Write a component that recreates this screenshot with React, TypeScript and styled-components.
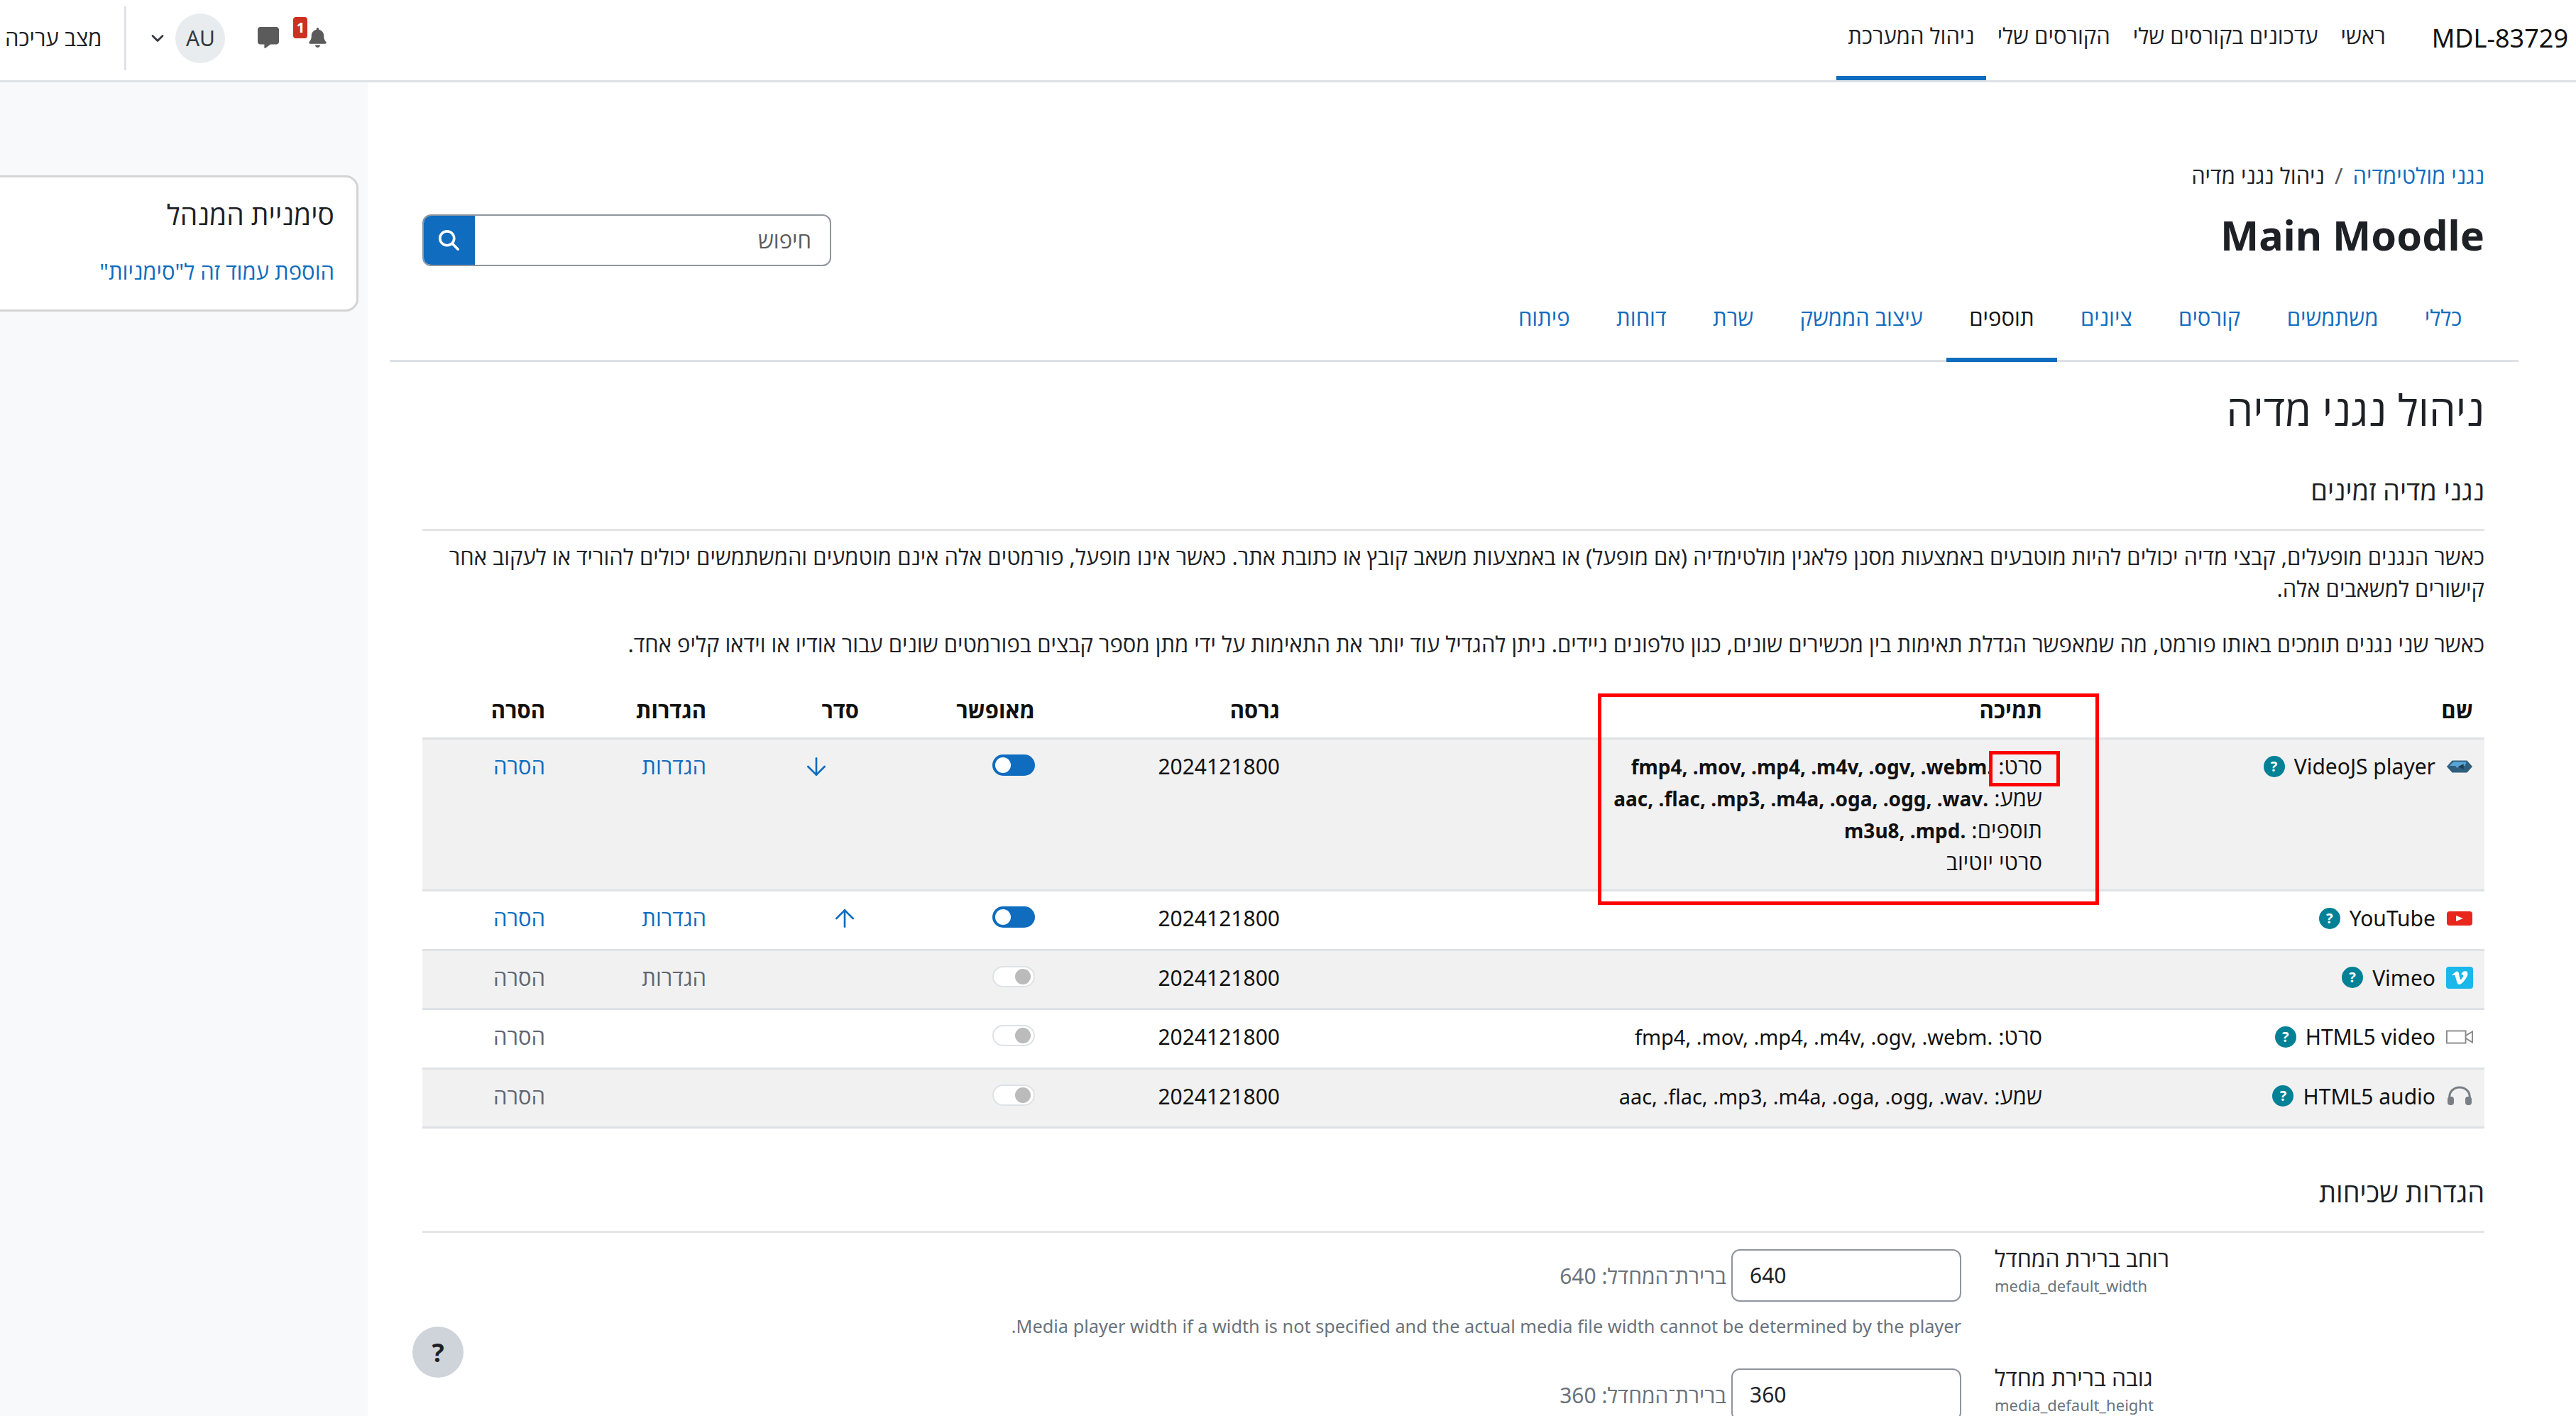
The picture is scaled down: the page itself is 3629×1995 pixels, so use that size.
import React from 'react';
import styled, { createGlobalStyle } from 'styled-components';
import { FaBell, FaMessage, FaMagnifyingGlass, FaVimeoV } from 'react-icons/fa6';
import { ArrowDown, ArrowUp, ChevronDown } from 'lucide-react';

const FONT = `"Noto Sans", "Open Sans", "Liberation Sans", sans-serif`;
const BLUE = '#0f6cbf';
const INK = '#1d2125';
const MUTED = '#6a737b';

const Global = createGlobalStyle`
  html, body { margin: 0; padding: 0; background: #fff; }
  body { font-family: ${FONT}; font-size: 31px; line-height: 45px; color: ${INK}; overflow: hidden; }
  * { box-sizing: border-box; }
`;

const Page = styled.div`
  width: 3629px;
  height: 1995px;
  overflow: hidden;
  display: flex;
  flex-direction: column;
`;

const Header = styled.header`
  flex: 0 0 116px;
  height: 116px;
  border-bottom: 3px solid #dee2e6;
  display: flex;
  align-items: stretch;
  padding: 0 11px 0 7px;
`;

const Brand = styled.div`
  align-self: center;
  font-size: 36px;
  color: #111;
  margin-left: 49px;
  margin-bottom: 6px;
`;

const TopNav = styled.nav`
  display: flex;
`;

const TopLink = styled.a<{ $active?: boolean }>`
  display: flex;
  align-items: center;
  padding: 0 16px 6px;
  color: ${INK};
  border-bottom: 6px solid ${p => (p.$active ? BLUE : 'transparent')};
`;

const UserArea = styled.div`
  margin-right: auto;
  display: flex;
  align-items: center;
  padding-bottom: 6px;
`;

const Bell = styled.div`
  position: relative;
  width: 27px;
  height: 30px;
  margin-left: 41px;
  color: #5b5b5b;
  display: flex;
`;

const Badge = styled.span`
  position: absolute;
  top: -15px;
  right: 28px;
  width: 20px;
  height: 30px;
  border-radius: 4px;
  background: #ca3120;
  color: #fff;
  font-size: 20px;
  line-height: 30px;
  font-weight: 700;
  text-align: center;
`;

const MessageIcon = styled.div`
  width: 30px;
  height: 31px;
  margin-left: 46px;
  color: #5b5b5b;
  display: flex;
`;

const Avatar = styled.div`
  width: 70px;
  height: 70px;
  border-radius: 50%;
  background: #e9ecef;
  color: #343a40;
  font-size: 30px;
  display: flex;
  align-items: center;
  justify-content: center;
  margin-left: 10px;
`;

const Chevron = styled.div`
  width: 30px;
  display: flex;
  justify-content: center;
  color: #343a40;
  margin-left: 29px;
`;

const Divider = styled.div`
  width: 3px;
  height: 90px;
  background: #dee2e6;
  margin-left: 32px;
`;

const EditMode = styled.span`
  color: ${INK};
`;

const Body = styled.div`
  flex: 1;
  min-height: 0;
  display: flex;
`;

const Main = styled.main`
  flex: 1;
  min-width: 0;
  padding: 109px 129px 0 77px;
`;

const Drawer = styled.aside`
  flex: 0 0 518px;
  background: #f8f9fa;
  padding: 131px 13px 0 0;
`;

const BlockCard = styled.section`
  margin-left: -40px;
  height: 192px;
  background: #fff;
  border: 3px solid #d4d4d4;
  border-radius: 18px;
  padding: 28px 31px 0 0;
`;

const BlockTitle = styled.h5`
  margin: 0 0 34px;
  font-size: 39px;
  line-height: 48px;
  font-weight: 400;
  color: ${INK};
`;

const TextLink = styled.a`
  color: ${BLUE};
`;

const Breadcrumb = styled.div`
  display: flex;
  height: 45px;
`;

const Sep = styled.span`
  color: #5b5b5b;
  margin: 0 14px;
`;

const HeadRow = styled.div`
  margin-top: 26px;
  height: 89px;
  display: flex;
  justify-content: space-between;
  align-items: flex-start;
`;

const SiteTitle = styled.h1`
  margin: 0;
  font-size: 57.5px;
  line-height: 70px;
  font-weight: 700;
  color: ${INK};
`;

const SearchBox = styled.div`
  margin-top: 6px;
  width: 576px;
  height: 73px;
  display: flex;
  border: 2px solid #8f959e;
  border-radius: 12px;
  overflow: hidden;
`;

const SearchLabel = styled.span`
  flex: 1;
  padding: 0 26px;
  color: #5b5b5b;
  line-height: 68px;
`;

const SearchButton = styled.div`
  width: 74px;
  margin: -2px 0 -2px -2px;
  background: ${BLUE};
  color: #fff;
  display: flex;
  align-items: center;
  justify-content: center;
`;

const Tabs = styled.nav`
  margin: 0 -48px 0 -46px;
  border-bottom: 3px solid #dee2e6;
  display: flex;
  padding-right: 47px;
`;

const Tab = styled.a<{ $active?: boolean }>`
  padding: 40px 32.7px 34px;
  color: ${p => (p.$active ? '#111' : BLUE)};
  border-bottom: 6px solid ${p => (p.$active ? BLUE : 'transparent')};
  margin-bottom: -3px;
`;

const PageTitle = styled.h2`
  margin: 31px 0 0;
  font-size: 60px;
  line-height: 72px;
  font-weight: 400;
  color: ${INK};
`;

const SectionTitle = styled.h3<{ $top: number }>`
  margin: ${p => p.$top}px 0 0;
  padding-bottom: 33px;
  font-size: 38px;
  line-height: 44px;
  font-weight: 400;
  color: ${INK};
  border-bottom: 3px solid #e5e5e5;
`;

const Para = styled.p`
  margin: 14px 0 33px;
  color: ${INK};
  & + & { margin-top: 0; margin-bottom: 32px; }
`;

const TableWrap = styled.div`
  position: relative;
`;

const Table = styled.table`
  width: 2905px;
  table-layout: fixed;
  border-collapse: collapse;
`;

const Th = styled.th`
  padding: 16px;
  text-align: right;
  font-weight: 700;
  color: #111;
  border-bottom: 3px solid #dee2e6;
`;

const Tr = styled.tr<{ $striped?: boolean }>`
  background: ${p => (p.$striped ? '#f1f1f2' : '#fff')};
`;

const Td = styled.td`
  padding: 15px 16px 16px;
  height: 83.6px;
  vertical-align: top;
  text-align: right;
  color: #111;
  border-bottom: 3px solid #dee2e6;
`;

const LatinCell = styled(Td)`
  font-size: 30px;
`;

const NameCell = styled.div`
  display: flex;
  align-items: center;
  height: 45px;
  font-size: 30px;
`;

const PluginIcon = styled.span`
  width: 38px;
  margin-left: 15px;
  display: flex;
  justify-content: center;
`;

const VimeoBox = styled.span`
  width: 40px;
  height: 31px;
  border-radius: 4px;
  background: #1ab7ea;
  color: #fff;
  display: flex;
  align-items: center;
  justify-content: center;
`;

const HelpDot = styled.span`
  width: 30px;
  height: 30px;
  margin-right: 13px;
  border-radius: 50%;
  background: #008196;
  color: #fff;
  font-size: 20px;
  line-height: 30px;
  font-weight: 700;
  text-align: center;
`;

const SupportLine = styled.div`
  height: 45px;
`;

const Formats = styled.span`
  font-size: 29px;
`;

const FormatsBold = styled.strong`
  font-size: 28px;
  font-weight: 700;
`;

const Toggle = styled.span<{ $on?: boolean }>`
  display: flex;
  width: 60px;
  height: 30px;
  margin-top: 6px;
  border-radius: 15px;
  padding: 0 4px;
  align-items: center;
  justify-content: flex-end;
  background: ${p => (p.$on ? BLUE : '#fff')};
  border: ${p => (p.$on ? 'none' : '2px solid #dee2e6')};
  &::before {
    content: '';
    width: 22px;
    height: 22px;
    border-radius: 50%;
    background: ${p => (p.$on ? '#fff' : '#bbb')};
    margin-left: ${p => (p.$on ? '0' : 'auto')};
  }
`;

const OrderCell = styled.div`
  display: flex;
  height: 45px;
  align-items: center;
  color: ${BLUE};
`;

const OrderSlot = styled.span`
  width: 40px;
  display: flex;
  justify-content: center;
`;

const Dim = styled.span`
  color: #5f6670;
`;

const Annotation = styled.div`
  position: absolute;
  border: 5px solid #ff0000;
  pointer-events: none;
`;

const OuterMark = styled(Annotation)`
  left: 1656px;
  top: 15px;
  width: 706px;
  height: 298px;
`;

const InnerMark = styled(Annotation)`
  left: 2207px;
  top: 96px;
  width: 100px;
  height: 50px;
`;

const SettingRow = styled.div<{ $top: number }>`
  margin-top: ${p => p.$top}px;
  display: flex;
  gap: 47px;
`;

const SettingLabel = styled.div`
  flex: 0 0 690px;
  text-align: left;
`;

const LabelText = styled.div`
  line-height: 26px;
  height: 30px;
  font-size: 32px;
  color: ${INK};
`;

const SettingKey = styled.div`
  margin-top: 10px;
  font-size: 22px;
  line-height: 22px;
  color: ${MUTED};
`;

const SettingControl = styled.div`
  flex: 1;
`;

const InputLine = styled.div`
  display: flex;
  align-items: center;
  gap: 7px;
`;

const FakeInput = styled.div`
  width: 324px;
  height: 74px;
  border: 2px solid #8f959e;
  border-radius: 12px;
  padding: 0 24px;
  font-size: 30px;
  line-height: 70px;
  text-align: left;
  color: ${INK};
`;

const DefaultNote = styled.span`
  font-size: 30px;
  color: ${MUTED};
`;

const Description = styled.div`
  margin-top: 16px;
  font-size: 25.3px;
  line-height: 36px;
  color: ${MUTED};
`;

const HelpFab = styled.div`
  position: fixed;
  left: 581px;
  top: 1869px;
  width: 72px;
  height: 72px;
  border-radius: 50%;
  background: #ced4da;
  color: ${INK};
  font-size: 36px;
  font-weight: 700;
  display: flex;
  align-items: center;
  justify-content: center;
`;

const VideoJsIcon = () => (
  <svg width="40" height="20" viewBox="0 0 40 20">
    <path d="M1 10 L9 1 H31 L39 10 L31 19 H9 Z" fill="#2f5f7d" />
    <path d="M5 9 L11 3 H30 L28 9 H20 L16 12 L14 9 Z" fill="#5aa5d6" />
    <path d="M18 10 L26 6 V14 Z" fill="#1e3d52" />
  </svg>
);

const YoutubeIcon = () => (
  <svg width="36" height="20" viewBox="0 0 36 20">
    <rect width="36" height="20" rx="4" fill="#e8261c" />
    <path d="M13 6 L23 10 L13 14 Z" fill="#fff" />
  </svg>
);

const CameraIcon = () => (
  <svg width="40" height="20" viewBox="0 0 40 20" fill="none" stroke="#8a8a8a" strokeWidth="2">
    <rect x="1" y="1" width="28" height="18" />
    <path d="M29 8 L39 2 V18 L29 12" />
  </svg>
);

const HeadphonesIcon = () => (
  <svg width="36" height="28" viewBox="0 0 36 28" fill="none">
    <path d="M4 19 C2 8 10 2 18 2 C26 2 34 8 32 19" stroke="#7a7f85" strokeWidth="3" />
    <rect x="1" y="15" width="9" height="12" rx="4" fill="#7a7f85" />
    <rect x="26" y="15" width="9" height="12" rx="4" fill="#7a7f85" />
  </svg>
);

type Plugin = {
  name: string;
  icon: React.ReactNode;
  support: React.ReactNode;
  on?: boolean;
  order?: React.ReactNode;
  settings?: boolean;
  settingsActive?: boolean;
};

const VIDEO = '.fmp4, .mov, .mp4, .m4v, .ogv, .webm';
const AUDIO = '.aac, .flac, .mp3, .m4a, .oga, .ogg, .wav';

const plugins: Plugin[] = [
  {
    name: 'VideoJS player',
    icon: <VideoJsIcon />,
    support: (
      <>
        <SupportLine>סרט: <FormatsBold>{VIDEO}</FormatsBold></SupportLine>
        <SupportLine>שמע: <FormatsBold>{AUDIO}</FormatsBold></SupportLine>
        <SupportLine>תוספים: <FormatsBold>.m3u8, .mpd</FormatsBold></SupportLine>
        <SupportLine>סרטי יוטיוב</SupportLine>
      </>
    ),
    on: true,
    order: (
      <>
        <OrderSlot />
        <OrderSlot><ArrowDown size={42} strokeWidth={1.6} /></OrderSlot>
      </>
    ),
    settings: true,
    settingsActive: true,
  },
  {
    name: 'YouTube',
    icon: <YoutubeIcon />,
    support: null,
    on: true,
    order: <OrderSlot><ArrowUp size={42} strokeWidth={1.6} /></OrderSlot>,
    settings: true,
    settingsActive: true,
  },
  {
    name: 'Vimeo',
    icon: <VimeoBox><FaVimeoV size={25} /></VimeoBox>,
    support: null,
    settings: true,
  },
  { name: 'HTML5 video', icon: <CameraIcon />, support: <SupportLine>סרט: <Formats>{VIDEO}</Formats></SupportLine> },
  { name: 'HTML5 audio', icon: <HeadphonesIcon />, support: <SupportLine>שמע: <Formats>{AUDIO}</Formats></SupportLine> },
];

const topLinks = ['ראשי', 'עדכונים בקורסים שלי', 'הקורסים שלי'];
const tabs = ['כללי', 'משתמשים', 'קורסים', 'ציונים', 'תוספים', 'עיצוב הממשק', 'שרת', 'דוחות', 'פיתוח'];

export default function App() {
  return (
    <Page dir="rtl">
      <Global />
      <Header>
        <Brand>MDL-83729</Brand>
        <TopNav>
          {topLinks.map(l => <TopLink key={l}>{l}</TopLink>)}
          <TopLink $active>ניהול המערכת</TopLink>
        </TopNav>
        <UserArea>
          <Bell>
            <FaBell size={28} />
            <Badge>1</Badge>
          </Bell>
          <MessageIcon><FaMessage size={30} /></MessageIcon>
          <Avatar>AU</Avatar>
          <Chevron><ChevronDown size={28} strokeWidth={2.4} /></Chevron>
          <Divider />
          <EditMode>מצב עריכה</EditMode>
        </UserArea>
      </Header>
      <Body>
        <Main>
          <Breadcrumb>
            <TextLink>נגני מולטימדיה</TextLink>
            <Sep>/</Sep>
            <span>ניהול נגני מדיה</span>
          </Breadcrumb>
          <HeadRow>
            <SiteTitle>Main Moodle</SiteTitle>
            <SearchBox>
              <SearchLabel>חיפוש</SearchLabel>
              <SearchButton><FaMagnifyingGlass size={29} /></SearchButton>
            </SearchBox>
          </HeadRow>
          <Tabs>
            {tabs.map(t => <Tab key={t} $active={t === 'תוספים'}>{t}</Tab>)}
          </Tabs>
          <PageTitle>ניהול נגני מדיה</PageTitle>
          <SectionTitle $top={55}>נגני מדיה זמינים</SectionTitle>
          <Para>
            כאשר הנגנים מופעלים, קבצי מדיה יכולים להיות מוטבעים באמצעות מסנן פלאגין מולטימדיה (אם מופעל) או באמצעות משאב קובץ או כתובת אתר. כאשר אינו מופעל, פורמטים אלה אינם מוטמעים והמשתמשים יכולים להוריד או לעקוב אחר קישורים למשאבים אלה.
          </Para>
          <Para>
            כאשר שני נגנים תומכים באותו פורמט, מה שמאפשר הגדלת תאימות בין מכשירים שונים, כגון טלפונים ניידים. ניתן להגדיל עוד יותר את התאימות על ידי מתן מספר קבצים בפורמטים שונים עבור אודיו או וידאו קליפ אחד.
          </Para>
          <TableWrap>
            <Table>
              <colgroup>
                <col width={607} />
                <col width={1074} />
                <col width={345} />
                <col width={248} />
                <col width={215} />
                <col width={227} />
                <col width={189} />
              </colgroup>
              <thead>
                <tr>
                  <Th>שם</Th>
                  <Th>תמיכה</Th>
                  <Th>גרסה</Th>
                  <Th>מאופשר</Th>
                  <Th>סדר</Th>
                  <Th>הגדרות</Th>
                  <Th>הסרה</Th>
                </tr>
              </thead>
              <tbody>
                {plugins.map((p, i) => (
                  <Tr key={p.name} $striped={i % 2 === 0}>
                    <Td>
                      <NameCell>
                        <PluginIcon>{p.icon}</PluginIcon>
                        {p.name}
                        <HelpDot>?</HelpDot>
                      </NameCell>
                    </Td>
                    <Td>{p.support}</Td>
                    <LatinCell>2024121800</LatinCell>
                    <Td><Toggle $on={p.on} /></Td>
                    <Td>{p.order && <OrderCell>{p.order}</OrderCell>}</Td>
                    <Td>
                      {p.settings && (p.settingsActive ? <TextLink>הגדרות</TextLink> : <Dim>הגדרות</Dim>)}
                    </Td>
                    <Td>{p.on ? <TextLink>הסרה</TextLink> : <Dim>הסרה</Dim>}</Td>
                  </Tr>
                ))}
              </tbody>
            </Table>
            <OuterMark />
            <InnerMark />
          </TableWrap>
          <SectionTitle $top={67}>הגדרות שכיחות</SectionTitle>
          <SettingRow $top={23}>
            <SettingLabel>
              <LabelText>רוחב ברירת המחדל</LabelText>
              <SettingKey>media_default_width</SettingKey>
            </SettingLabel>
            <SettingControl>
              <InputLine>
                <FakeInput>640</FakeInput>
                <DefaultNote>ברירת־המחדל: 640</DefaultNote>
              </InputLine>
              <Description>Media player width if a width is not specified and the actual media file width cannot be determined by the player.</Description>
            </SettingControl>
          </SettingRow>
          <SettingRow $top={42}>
            <SettingLabel>
              <LabelText>גובה ברירת מחדל</LabelText>
              <SettingKey>media_default_height</SettingKey>
            </SettingLabel>
            <SettingControl>
              <InputLine>
                <FakeInput>360</FakeInput>
                <DefaultNote>ברירת־המחדל: 360</DefaultNote>
              </InputLine>
            </SettingControl>
          </SettingRow>
        </Main>
        <Drawer>
          <BlockCard>
            <BlockTitle>סימניית המנהל</BlockTitle>
            <TextLink>הוספת עמוד זה ל"סימניות"</TextLink>
          </BlockCard>
        </Drawer>
      </Body>
      <HelpFab>?</HelpFab>
    </Page>
  );
}
